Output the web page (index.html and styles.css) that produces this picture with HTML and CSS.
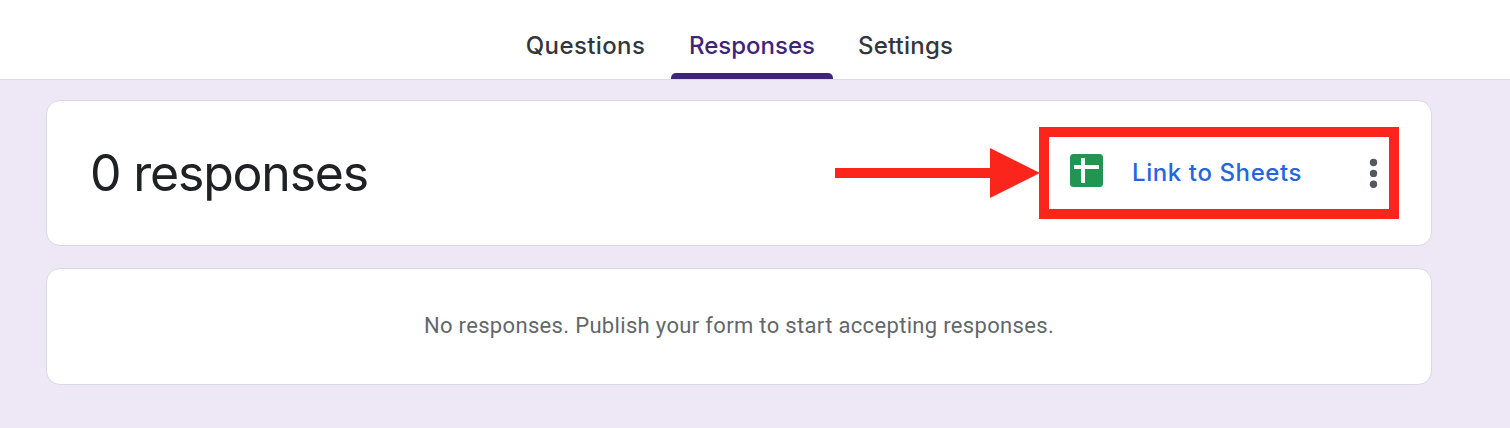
FILE: index.html
```html
<!DOCTYPE html>
<html lang="en">
<head>
<meta charset="utf-8">
<title>Form responses</title>
<link rel="stylesheet" href="styles.css">
</head>
<body>
<header class="topbar">
  <nav class="tabs">
    <a class="tab tab-questions"><span>Questions</span></a>
    <a class="tab tab-active"><span>Responses</span></a>
    <a class="tab tab-settings"><span>Settings</span></a>
  </nav>
</header>
<main class="content">
  <section class="card summary">
    <h1 class="count">0 responses</h1>
    <div class="actions">
      <button class="link-sheets">
        <svg class="sheets-icon" width="33" height="33" viewBox="0 0 33 33" aria-hidden="true">
          <rect width="33" height="33" rx="3.5" fill="#219653"/>
          <path d="M4 11h25v4H4zM11 4h4v25h-4z" fill="#fff"/>
        </svg>
        <span class="link-label">Link to Sheets</span>
      </button>
      <button class="more" aria-label="More options">
        <svg width="9" height="30" viewBox="0 0 9 30" aria-hidden="true" fill="#54585d">
          <circle cx="4.5" cy="4.5" r="3.7"/><circle cx="4.5" cy="15.4" r="3.7"/><circle cx="4.5" cy="26.2" r="3.7"/>
        </svg>
      </button>
    </div>
    <svg class="arrow" width="205" height="50" viewBox="0 0 205 50" aria-hidden="true">
      <path d="M0 20h155V0l50 25-50 25V30H0z" fill="#fc251c"/>
    </svg>
    <div class="highlight"></div>
  </section>
  <section class="card empty">
    <p class="message">No responses. Publish your form to start accepting responses.</p>
  </section>
</main>
</body>
</html>
```
FILE: styles.css
```css
* { box-sizing: border-box; }
body {
  margin: 0;
  min-height: 428px;
  background: #ede7f6;
  font-family: Inter, Roboto, sans-serif;
}
.topbar {
  height: 80px;
  background: #fff;
  border-bottom: 1px solid #dadce0;
}
.tabs {
  display: flex;
  height: 79px;
  padding-left: 508px;
}
.tab {
  display: flex;
  flex-direction: column;
  align-items: center;
  padding-top: 30px;
  font-size: 24px;
  line-height: 32px;
  font-weight: 550;
  color: #33373b;
  white-space: nowrap;
}
.tab-questions { width: 155px; letter-spacing: 0.4px; }
.tab-active {
  width: 162px;
  margin: 0 8px;
  color: #42237a;
}
.tab-active::after {
  content: "";
  width: 100%;
  height: 6px;
  margin-top: auto;
  border-radius: 5px 5px 0 0;
  background: #42237a;
}
.tab-settings { width: 129px; letter-spacing: 0.2px; }
.content {
  display: flex;
  flex-direction: column;
  gap: 22px;
  width: 1386px;
  margin: 20px 0 0 46px;
}
.card {
  background: #fff;
  border: 1px solid #d8dadf;
  border-radius: 14px;
}
.summary {
  position: relative;
  display: flex;
  align-items: center;
  justify-content: space-between;
  height: 146px;
  padding: 0 53px 0 43px;
}
.count {
  margin: 0;
  font-size: 50px;
  line-height: 64px;
  font-weight: 440;
  letter-spacing: -1.2px;
  color: #202124;
}
.actions { display: flex; align-items: center; }
button { padding: 0; border: 0; background: none; font: inherit; }
.link-sheets { display: flex; align-items: center; gap: 29px; width: 299px; }
.sheets-icon { margin-top: -5px; }
.link-label {
  font-size: 24px;
  line-height: 32px;
  font-weight: 450;
  letter-spacing: 0.6px;
  color: #2566dc;
  white-space: nowrap;
}
.more { display: flex; }
.arrow { position: absolute; left: 788px; top: 47px; }
.highlight {
  position: absolute;
  left: 992px;
  top: 26px;
  width: 360px;
  height: 92px;
  border: 10px solid #fc251c;
}
.empty {
  display: flex;
  align-items: center;
  justify-content: center;
  height: 117px;
  padding-bottom: 2px;
}
.message {
  margin: 0;
  font-family: Roboto, sans-serif;
  font-size: 22px;
  line-height: 30px;
  letter-spacing: 0.33px;
  color: #63676b;
}
```
